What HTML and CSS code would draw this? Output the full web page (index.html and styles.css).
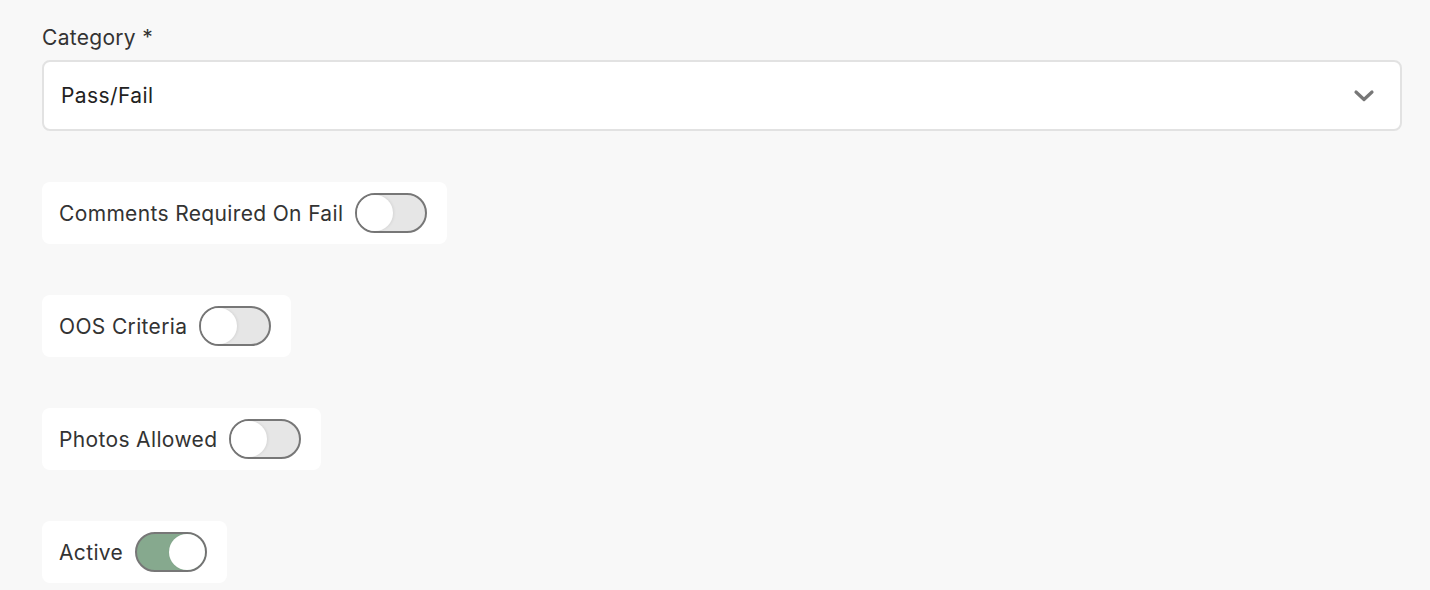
FILE: index.html
```html
<!DOCTYPE html>
<html>
<head>
<meta charset="utf-8">
<link rel="stylesheet" href="styles.css">
</head>
<body>
<div class="form">
  <div class="field">
    <label class="label">Category *</label>
    <div class="select">
      <span class="select-value">Pass/Fail</span>
      <svg class="chevron" width="22" height="14" viewBox="0 0 22 14"><path d="M3 3 L11 10.5 L19 3" fill="none" stroke="#777" stroke-width="3.2" stroke-linecap="round" stroke-linejoin="round"/></svg>
    </div>
  </div>
  <div class="toggle-card"><span>Comments Required On Fail</span><span class="switch"><span class="knob"></span></span></div>
  <div class="toggle-card"><span>OOS Criteria</span><span class="switch"><span class="knob"></span></span></div>
  <div class="toggle-card"><span>Photos Allowed</span><span class="switch"><span class="knob"></span></span></div>
  <div class="toggle-card"><span>Active</span><span class="switch on"><span class="knob"></span></span></div>
</div>
</body>
</html>
```
FILE: styles.css
```css
html, body { margin: 0; padding: 0; background: #f8f8f8; }
body { font-family: Inter, "Noto Sans", sans-serif; color: #333; }
.form { padding: 26px 28px 0 42px; display: flex; flex-direction: column; align-items: flex-start; gap: 51px; }
.field { width: 100%; display: flex; flex-direction: column; gap: 10px; }
.label { font-size: 21px; line-height: 24px; letter-spacing: 0.3px; color: #333; }
.select { box-sizing: border-box; height: 71px; border: 2px solid #e2e2e2; border-radius: 8px; background: #fff; display: flex; align-items: center; justify-content: space-between; padding: 0 25px 0 17px; }
.select-value { font-size: 21px; letter-spacing: 0.4px; color: #222; }
.chevron { display: block; }
.toggle-card { box-sizing: border-box; height: 62px; background: #fff; border-radius: 8px; display: flex; align-items: center; gap: 12px; padding: 0 20px 0 17px; font-size: 21px; letter-spacing: 0.35px; color: #333; }
.switch { box-sizing: border-box; width: 72px; height: 40px; border: 2px solid #777; border-radius: 20px; background: #e6e6e6; display: flex; align-items: center; padding: 0; letter-spacing: 0; }
.knob { width: 36px; height: 36px; border-radius: 50%; background: #fff; box-shadow: 1px 0 3px rgba(0,0,0,0.08); }
.switch.on { background: #86a98e; justify-content: flex-end; }
```
